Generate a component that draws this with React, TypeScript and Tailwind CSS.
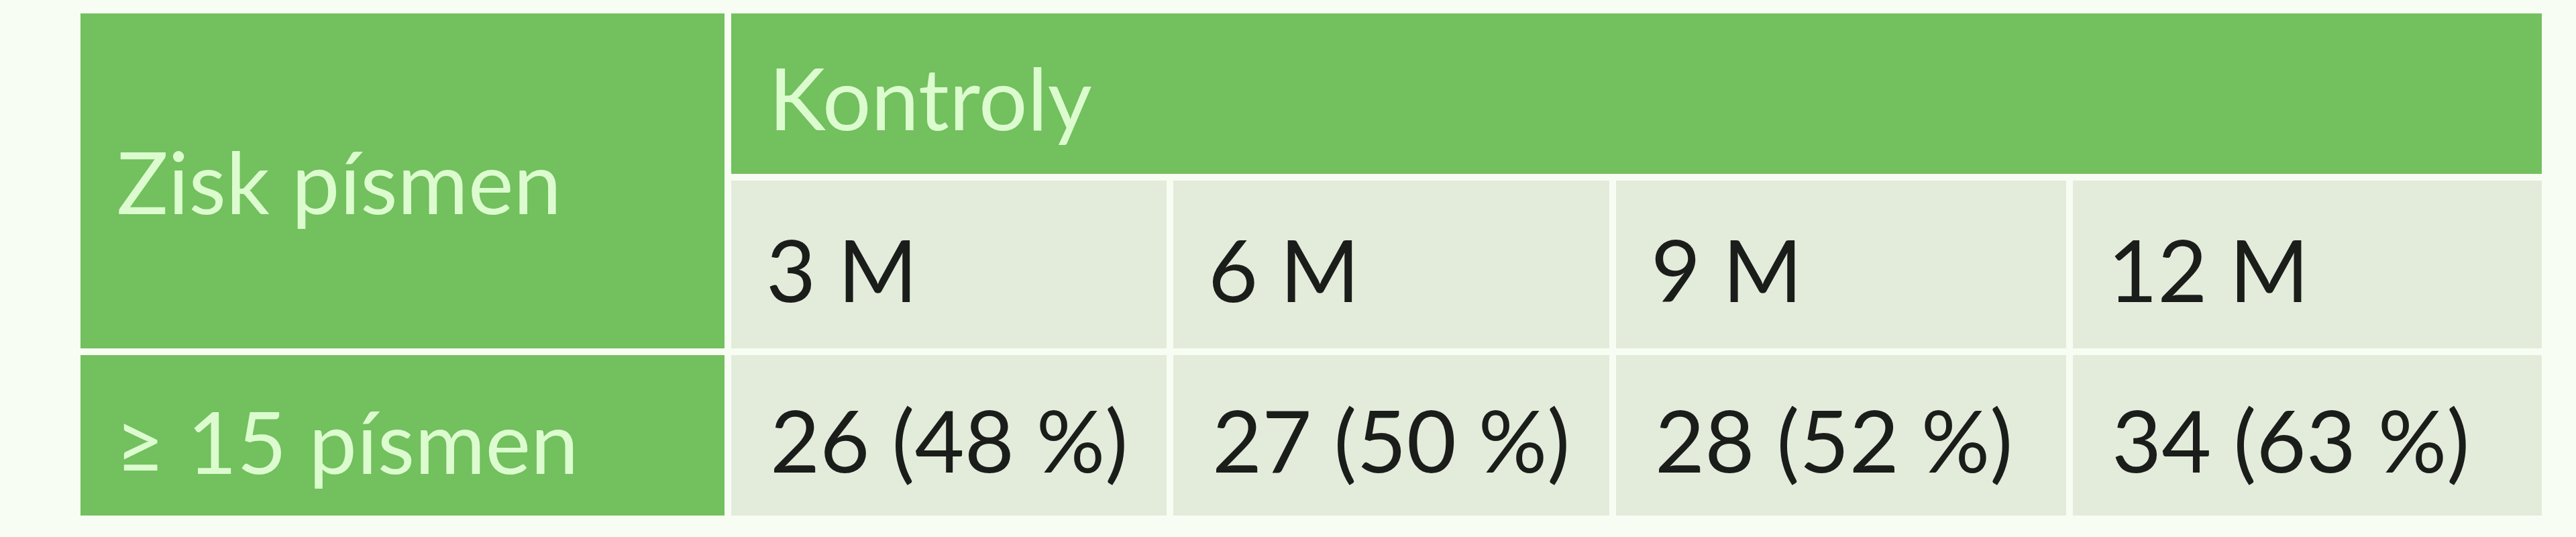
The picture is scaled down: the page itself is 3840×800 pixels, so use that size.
import React from "react";

const font = { fontFamily: "Lato, 'Open Sans', sans-serif" };

export default function App() {
  const months = ["3 M", "6 M", "9 M", "12 M"];
  const values = ["26 (48 %)", "27 (50 %)", "28 (52 %)", "34 (63 %)"];
  return (
    <div
      className="w-[3840px] h-[800px] bg-[#f7fdf2] pt-[20px] pl-[120px]"
      style={font}
    >
      <div className="grid grid-cols-[960px_649px_650px_671px_699px] grid-rows-[239px_250px_239px] gap-x-[10px] gap-y-[10px] w-max">
        <div className="row-span-2 bg-[#72c05e] flex items-center pl-[54px] text-[128px] leading-none text-[#dcfccf]">
          Zisk písmen
        </div>
        <div className="col-span-4 bg-[#72c05e] flex items-center pl-[56px] pt-[10px] text-[128px] leading-none text-[#dcfccf]">
          Kontroly
        </div>
        {months.map((m) => (
          <div
            key={m}
            className="bg-[#e3ecdb] flex items-center pl-[52px] pt-[14px] text-[128px] leading-none text-[#1a1d19]"
          >
            {m}
          </div>
        ))}
        <div className="bg-[#72c05e] flex items-center pl-[52px] pt-[16px] text-[128px] leading-none text-[#dcfccf]">
          ≥ 15 písmen
        </div>
        {values.map((v) => (
          <div
            key={v}
            className="bg-[#e3ecdb] flex items-center pl-[58px] pt-[12px] text-[128px] leading-none text-[#1a1d19] whitespace-nowrap"
          >
            {v}
          </div>
        ))}
      </div>
    </div>
  );
}
